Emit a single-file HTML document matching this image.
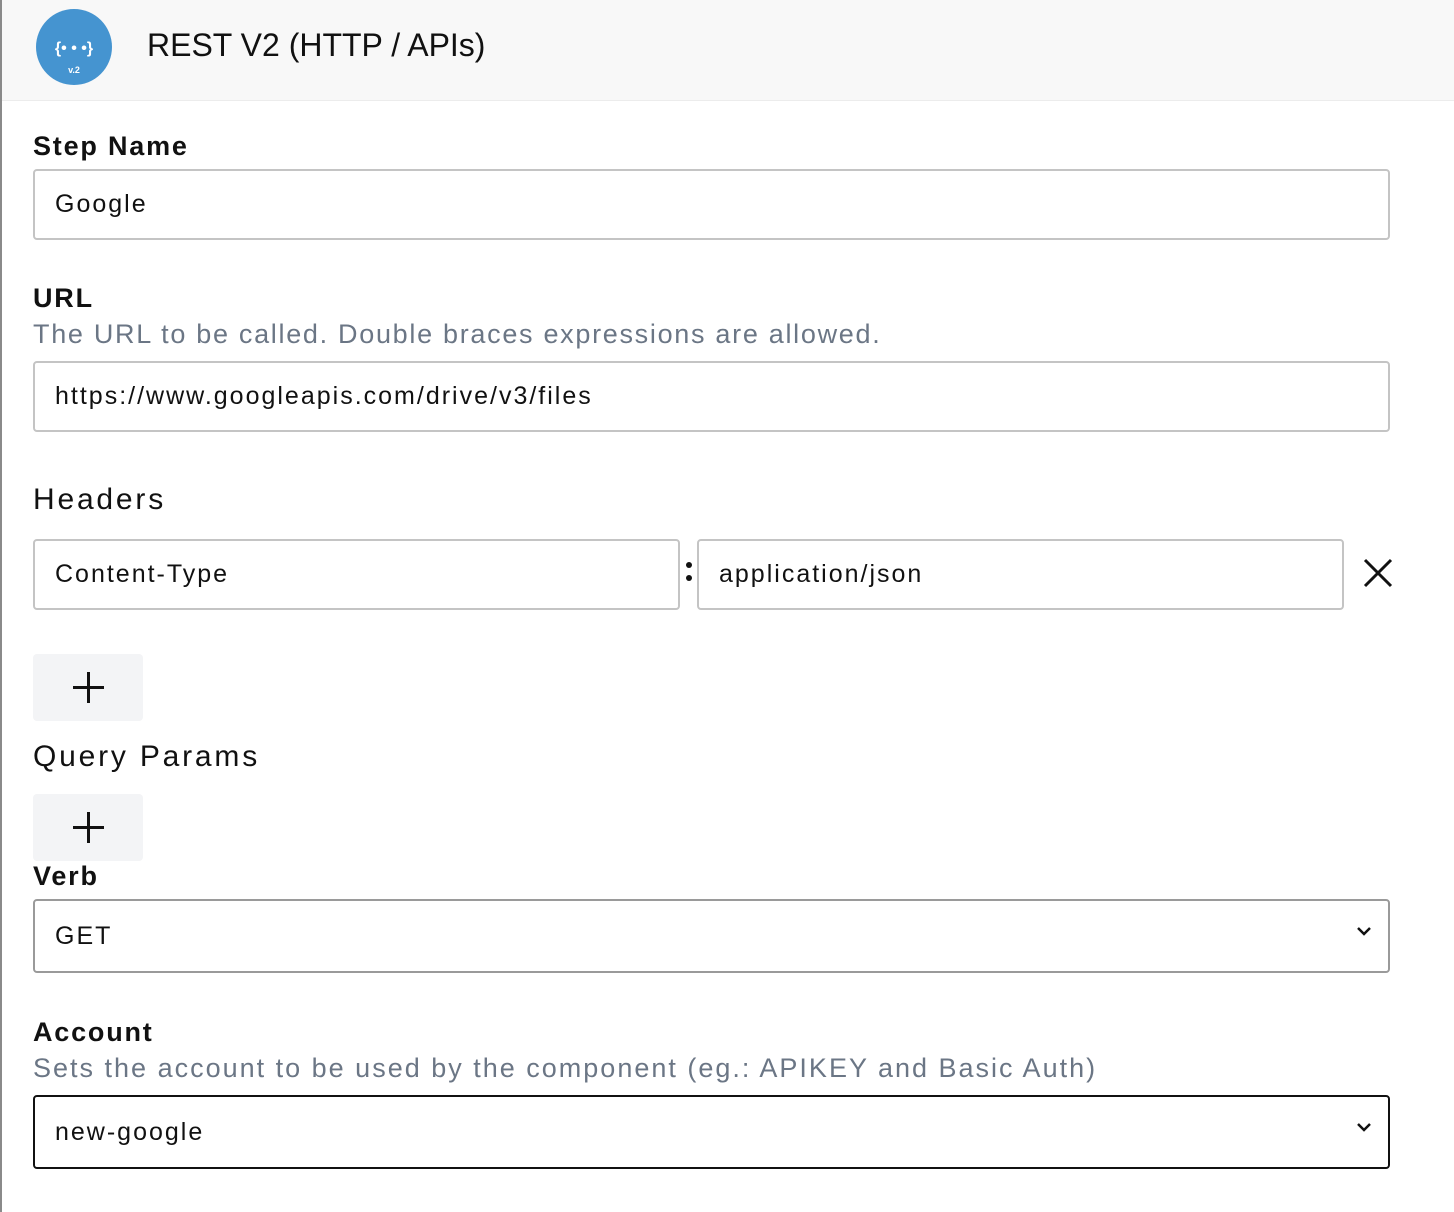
<!DOCTYPE html>
<html><head><meta charset="utf-8"><style>
*{box-sizing:border-box;margin:0;padding:0}
body{width:1454px;height:1212px;background:#fff;font-family:"Liberation Sans",sans-serif;color:#111;position:relative;overflow:hidden}
.lb{position:absolute;left:0;top:0;width:2px;height:1212px;background:#8a8a8a}
.hdr{position:absolute;left:2px;top:0;width:1452px;height:101px;background:#f8f8f8;border-bottom:1px solid #ececec}
.a{position:absolute;white-space:nowrap}
.lbl{font-size:27px;font-weight:bold;line-height:1;letter-spacing:1.8px}
.help{font-size:27px;color:#6b7685;line-height:1}
.inp{position:absolute;border:2px solid #c4c4c4;border-radius:4px;background:#fff;font-size:25px;padding-left:20px;display:flex;align-items:center;letter-spacing:2px}
.btn{position:absolute;left:33px;width:110px;height:67px;background:#f3f4f6;border-radius:4px}
.btn:before{content:"";position:absolute;left:40px;top:32px;width:31px;height:3px;background:#111}
.btn:after{content:"";position:absolute;left:54px;top:18px;width:3px;height:31px;background:#111}
.sec{font-size:30px;line-height:1;letter-spacing:2.8px}
</style></head><body>
<div class="lb"></div>
<div class="hdr"></div>
<svg class="a" style="left:36px;top:9px" width="76" height="76" viewBox="0 0 76 76"><circle cx="38" cy="38" r="38" fill="#4594d0"/>
<text x="38" y="44" text-anchor="middle" font-family="Liberation Sans" font-weight="bold" font-size="16" fill="#fff">{• • •}</text>
<text x="38" y="64" text-anchor="middle" font-family="Liberation Sans" font-weight="bold" font-size="9" fill="#fff">v.2</text></svg>
<div class="a" style="left:147px;top:29px;font-size:32px;line-height:1">REST V2 (HTTP / APIs)</div>

<div class="a lbl" style="left:33px;top:133px">Step Name</div>
<div class="inp" style="left:33px;top:169px;width:1357px;height:71px">Google</div>

<div class="a lbl" style="left:33px;top:285px">URL</div>
<div class="a help" style="left:33px;top:321px;letter-spacing:1.7px">The URL to be called. Double braces expressions are allowed.</div>
<div class="inp" style="left:33px;top:361px;width:1357px;height:71px">https://www.googleapis.com/drive/v3/files</div>

<div class="a sec" style="left:33px;top:485px">Headers</div>
<div class="inp" style="left:33px;top:539px;width:647px;height:71px">Content-Type</div>
<div class="a" style="left:686px;top:562px;width:6px;height:6px;border-radius:3px;background:#111"></div>
<div class="a" style="left:686px;top:575px;width:6px;height:6px;border-radius:3px;background:#111"></div>
<div class="inp" style="left:697px;top:539px;width:647px;height:71px">application/json</div>
<svg class="a" style="left:1363px;top:558px" width="30" height="30" viewBox="0 0 30 30"><path d="M2 2L28 28M28 2L2 28" stroke="#111" stroke-width="3"/></svg>

<div class="btn" style="top:654px"></div>
<div class="a sec" style="left:33px;top:742px">Query Params</div>
<div class="btn" style="top:794px"></div>

<div class="a lbl" style="left:33px;top:863px">Verb</div>
<div class="inp" style="left:33px;top:899px;width:1357px;height:74px;border-color:#9a9a9a">GET</div>
<svg class="a" style="left:1356px;top:926px" width="16" height="10" viewBox="0 0 16 10"><path d="M2 2L8 8L14 2" stroke="#111" stroke-width="2.5" fill="none"/></svg>

<div class="a lbl" style="left:33px;top:1019px">Account</div>
<div class="a help" style="left:33px;top:1055px;letter-spacing:2px">Sets the account to be used by the component (eg.: APIKEY and Basic Auth)</div>
<div class="inp" style="left:33px;top:1095px;width:1357px;height:74px;border-color:#111">new-google</div>
<svg class="a" style="left:1356px;top:1122px" width="16" height="10" viewBox="0 0 16 10"><path d="M2 2L8 8L14 2" stroke="#111" stroke-width="2.5" fill="none"/></svg>
</body></html>
